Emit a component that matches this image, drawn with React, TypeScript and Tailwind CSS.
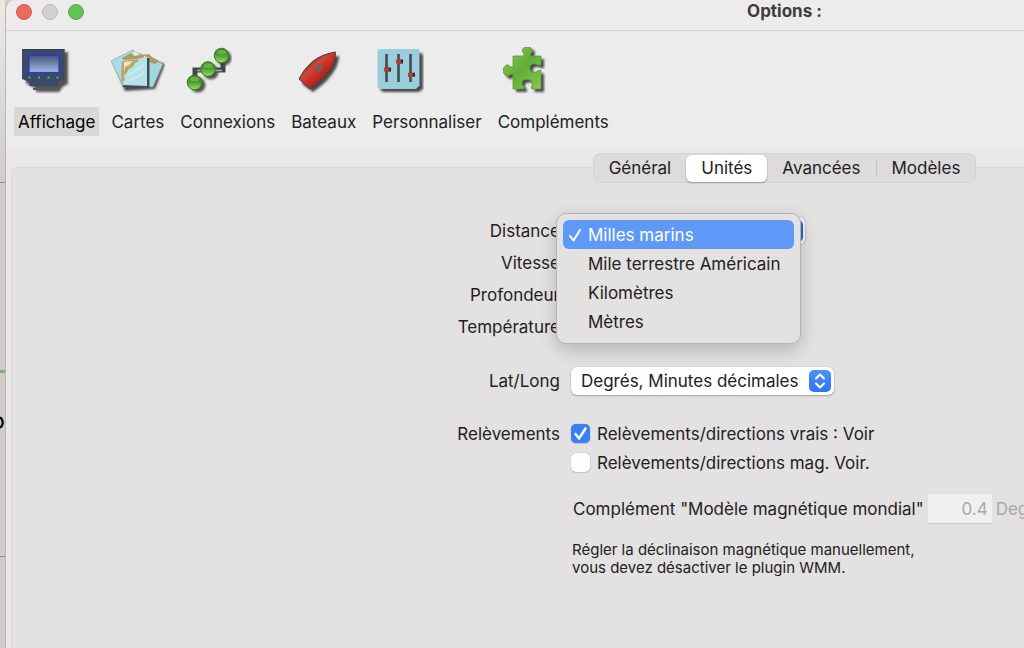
import React, { useState } from "react";

function MonitorIcon() {
  return (
    <svg viewBox="0 0 48 48" className="ml-2 size-12" aria-hidden="true">
      <defs>
        <linearGradient id="screen" x1="0" y1="0" x2="0" y2="1">
          <stop offset="0" stopColor="#42597b" />
          <stop offset="1" stopColor="#a3b9e6" />
        </linearGradient>
        <filter id="soft" x="-20%" y="-20%" width="140%" height="140%">
          <feGaussianBlur stdDeviation="0.8" />
        </filter>
      </defs>
      <path d="M4 5h42v32l-4 2-4 4v2H14v-3L4 36z" fill="#222" opacity="0.75" filter="url(#soft)" />
      <path d="M20 39h10v2h8v2H11v-2h9z" fill="#57585c" />
      <path d="M0 2h42.500v31l-6 1v5H7.500v-4L0 32z" fill="#3b4a66" />
      <path d="M0 2h42.500v2H0z" fill="#334468" />
      <rect x="7" y="8.500" width="30" height="17" fill="url(#screen)" stroke="#3037d4" strokeWidth="1.200" />
      <path d="M6.500 30.500h2M16 30.500h2M25.500 30.500h2M34.500 30.500h2" stroke="#55b76b" strokeWidth="1.800" />
    </svg>
  );
}

function ChartsIcon() {
  return (
    <svg viewBox="0 0 54 48" className="ml-1 h-12 w-[54px]" aria-hidden="true">
      <path d="m3 17 21-11 6 4 24 7-10 25-30 2z" fill="#222" opacity="0.8" filter="url(#soft)" />
      <path d="M0 14 22 3l5 4-8 32-6 1z" fill="#a9dce4" stroke="#7ea4aa" strokeWidth="0.700" />
      <path d="m25 5 27 12-10 23H31z" fill="#a4d7e0" stroke="#779ba1" strokeWidth="0.700" />
      <path d="m11 11 9-5 3 3 7-1 8-1 3 3 7 4-4 3-6-2-8 1-14 1z" fill="#b09a58" />
      <path d="m24 4 4 3-3 2-3-2zM33 9l5 2-2 3-4-1z" fill="#efe9d6" />
      <path d="M11 13c8 0 16-1 25-3v30l-23-1z" fill="#b5e3e9" />
      <path d="M36 11h2.500v30l-27-1 1-2 23.500 1z" fill="#424d50" />
      <path d="m11 14 17-2-1 3-3 1-2 4-4 2-3 5-2 1 1 5-3 2-1-7z" fill="#b9a66d" />
      <path d="m13 15 9-1-4 4-4 2-1 5z" fill="#ece4c6" />
      <path d="m18 29 7-6 8-5M18 34c6-5 11-3 15-9" fill="none" stroke="#d2f0f3" strokeWidth="1.300" />
    </svg>
  );
}

function ConnectionsIcon() {
  return (
    <svg viewBox="-2 0 48 48" className="ml-2 size-12" aria-hidden="true">
      <defs>
        <linearGradient id="ball" x1="0" y1="0" x2="0" y2="1">
          <stop offset="0" stopColor="#39851f" />
          <stop offset="0.450" stopColor="#4b9a2b" />
          <stop offset="0.550" stopColor="#55a832" />
          <stop offset="1" stopColor="#9ae065" />
        </linearGradient>
      </defs>
      <g fill="#222" opacity="0.750" filter="url(#soft)">
        <circle cx="38" cy="11" r="7.500" />
        <circle cx="25" cy="25" r="7.500" />
        <circle cx="12" cy="38" r="7.500" />
      </g>
      <path d="M9 34V23h14M23 23h14V12" fill="none" stroke="#3c4850" strokeWidth="5" />
      <path d="M11 23.500h25" stroke="#a8afb3" strokeWidth="1.400" />
      <g fill="url(#ball)" stroke="#35731f" strokeWidth="0.900">
        <circle cx="35.500" cy="8.500" r="7.300" />
        <circle cx="22" cy="22" r="7.300" />
        <circle cx="8.500" cy="35.500" r="7.300" />
      </g>
      <g fill="#b8de9e" opacity="0.350">
        <ellipse cx="35.500" cy="5" rx="4.500" ry="2.300" />
        <ellipse cx="22" cy="18.500" rx="4.500" ry="2.300" />
        <ellipse cx="8.500" cy="32" rx="4.500" ry="2.300" />
      </g>
    </svg>
  );
}

function BoatIcon() {
  return (
    <svg viewBox="0 0 48 48" className="ml-2 size-12" aria-hidden="true">
      <defs>
        <linearGradient id="hull" x1="0.200" y1="0.200" x2="0.750" y2="0.800">
          <stop offset="0" stopColor="#7e2723" />
          <stop offset="0.350" stopColor="#c9473e" />
          <stop offset="0.550" stopColor="#cf2f26" />
          <stop offset="1" stopColor="#8e1e1a" />
        </linearGradient>
      </defs>
      <path d="M7 37C13 23 28 9 44 9c0 12-11 26-26 36z" fill="#222" opacity="0.800" filter="url(#soft)" />
      <path d="M4 32Q8 23 17.500 14.500 27 7 40.500 5 41 14 36 21 29 32 15 42z" fill="url(#hull)" stroke="#5e3431" strokeWidth="1" />
      <path d="m21 20 4-3 3 2-1 4-3 2-4-1z" fill="#6d6260" />
    </svg>
  );
}

function SlidersIcon() {
  return (
    <svg viewBox="0 0 48 48" className="ml-2 size-12" aria-hidden="true">
      <path d="M4 6h41l2 2v34l-4 3H7l-3-3z" fill="#222" opacity="0.800" filter="url(#soft)" />
      <path d="M3 2h39.500l1 1v35.500L40 42H4l-2.500-2V3z" fill="#9bcedd" />
      <path d="M10.500 7v28M22.500 7v28M34.500 7v28" stroke="#424c50" strokeWidth="2.600" />
      <path d="M10 22.500h5M22 14.500h5M34 27.800h5" stroke="#332827" strokeWidth="4" />
      <path d="M8 22.500h5M20 14.500h5M32 27.800h5" stroke="#c0392d" strokeWidth="4.200" />
    </svg>
  );
}

function PuzzleIcon() {
  const piece =
    "M12 9h11V6l-1.500-1V2L24 0h5l2 2v3l-1.500 2v2H40v9h-3.500l-1.500-1h-4l-2 2v4l2 2h4l2-1.500H40V42h-9.500v-3l1-1.500-1-3.500-3-1.500h-4L21 34.500v3l2 2V42H12V27.500H9.500L7 29H5l-2.500-3v-5L5 18h2.500L10 20h2z";
  return (
    <svg viewBox="1 0 48 48" className="ml-2 size-12" aria-hidden="true">
      <defs>
        <linearGradient id="piece" x1="0" y1="0" x2="1" y2="1">
          <stop offset="0" stopColor="#8fcb58" />
          <stop offset="0.500" stopColor="#61ad35" />
          <stop offset="1" stopColor="#86c754" />
        </linearGradient>
      </defs>
      <path d={piece} transform="translate(3 3)" fill="#222" opacity="0.800" filter="url(#soft)" />
      <path d={piece} fill="url(#piece)" stroke="#5e9b3a" strokeWidth="0.800" />
    </svg>
  );
}

const sections = [
  { name: "Affichage", icon: <MonitorIcon /> },
  { name: "Cartes", icon: <ChartsIcon /> },
  { name: "Connexions", icon: <ConnectionsIcon /> },
  { name: "Bateaux", icon: <BoatIcon /> },
  { name: "Personnaliser", icon: <SlidersIcon /> },
  { name: "Compléments", icon: <PuzzleIcon /> },
];

const tabs = ["Général", "Unités", "Avancées", "Modèles"];
const distances = ["Milles marins", "Mile terrestre Américain", "Kilomètres", "Mètres"];

function PopUp({ id, options, width }: { id: string; options: string[]; width: string }) {
  return (
    <div className={`relative ${width}`}>
      <select
        id={id}
        className="h-7 w-full appearance-none rounded-md bg-white pr-8 pl-[10px] shadow-[0_0_1px_rgba(0,0,0,0.3),0_1px_2px_rgba(0,0,0,0.25)]"
      >
        {options.map((o) => (
          <option key={o}>{o}</option>
        ))}
      </select>
      <svg
        viewBox="0 0 22 22"
        className="pointer-events-none absolute top-[3px] right-[3px] size-[22px] rounded-[5px] bg-linear-to-b from-[#4b94f8] to-[#2e72ee]"
        aria-hidden="true"
      >
        <path d="m7 8.500 4-4 4 4M7 13.500l4 4 4-4" fill="none" stroke="#fff" strokeWidth="2" strokeLinecap="round" strokeLinejoin="round" />
      </svg>
    </div>
  );
}

function CheckBox({ label, checked, onChange }: { label: string; checked: boolean; onChange: () => void }) {
  return (
    <label className="flex h-[29px] items-center gap-[7px]">
      <span className="relative size-[19px]">
        <input
          type="checkbox"
          checked={checked}
          onChange={onChange}
          className="block size-[19px] appearance-none rounded-[5px] bg-white shadow-[0_0_1px_rgba(0,0,0,0.4),0_1px_1px_rgba(0,0,0,0.1)] checked:bg-[#3a80f5]"
        />
        {checked && (
          <svg viewBox="0 0 19 19" className="pointer-events-none absolute inset-0" aria-hidden="true">
            <path d="m4.500 10 3.500 4.500 6.500-10" fill="none" stroke="#fff" strokeWidth="2.400" strokeLinecap="round" strokeLinejoin="round" />
          </svg>
        )}
      </span>
      {label}
    </label>
  );
}

export default function App() {
  const [section, setSection] = useState("Affichage");
  const [tab, setTab] = useState("Unités");
  const [distance, setDistance] = useState("Milles marins");
  const [trueBearing, setTrueBearing] = useState(true);
  const [magBearing, setMagBearing] = useState(false);

  return (
    <div className="flex h-screen overflow-hidden bg-[#d0cdca] font-['Inter','Liberation_Sans',sans-serif] text-[17px] leading-6 text-[#222122]">
      <div className="flex w-[5px] shrink-0 flex-col overflow-hidden bg-linear-to-b from-[#ede9e4] to-[#cecbc8] to-30%">
        <div className="h-[183px] border-b border-[#8f8d8b]" />
        <div className="h-[187px]" />
        <div className="h-[3px] bg-[#7eab7e]" />
        <div className="flex h-[183px] justify-end pt-8 text-2xl text-black">o</div>
        <div className="border-t border-[#8f8d8b]" />
      </div>

      <main className="flex min-w-[1558px] flex-1 flex-col overflow-hidden rounded-tl-[10px] border-l border-[#b9b7b7] bg-[#e9e7e8]">
        <header className="relative flex h-[31px] items-center justify-center border-b border-[#d6d3d4] bg-[#eeebec] pb-2">
          <div className="absolute top-1 left-[10px] flex gap-[10px]">
            <button aria-label="Fermer" className="size-4 rounded-full border border-[#d85a50] bg-[#ed6a5e]" />
            <button aria-label="Réduire" className="size-4 rounded-full border border-[#bcb9ba] bg-[#d2d0d1]" />
            <button aria-label="Agrandir" className="size-4 rounded-full border border-[#54b145] bg-[#61c554]" />
          </div>
          <h1 className="font-bold text-[#3d3b3c]">Options :</h1>
        </header>

        <nav className="flex h-[116px] items-start gap-2 bg-[#ececec] pt-4 pl-2">
          {sections.map((s) => (
            <button key={s.name} onClick={() => setSection(s.name)} className="flex flex-col items-start gap-3">
              {s.icon}
              <span className={`flex h-[29px] items-center px-1 ${s.name === section ? "bg-[#d9d8d8] text-black" : ""}`}>
                {s.name}
              </span>
            </button>
          ))}
        </nav>

        <section className="mx-[5px] mt-5 flex-1 rounded-t-md border border-b-0 border-[#d8d6d7] bg-[#e3e1e2]">
          <div className="-mt-[15px] flex justify-center">
            <div className="flex h-[30px] items-center rounded-[7px] border border-[#d4d2d3] bg-[#dddbdc]">
              {tabs.map((t) => (
                <React.Fragment key={t}>
                  {t === "Modèles" && <span className="h-4 w-px bg-[#c6c4c5]" />}
                  <button
                    onClick={() => setTab(t)}
                    className={`h-[27px] px-[15px] ${t === tab ? "rounded-md bg-white shadow-[0_1px_2px_rgba(0,0,0,0.3)]" : ""}`}
                  >
                    {t}
                  </button>
                </React.Fragment>
              ))}
            </div>
          </div>

          <form className="grid grid-cols-[548px_1fr] gap-x-[11px] pt-8">
            <span id="distance-label" className="flex h-8 items-center justify-end">Distance</span>
            <div className="relative flex items-center">
              <button
                type="button"
                aria-labelledby="distance-label"
                className="flex h-7 w-[234px] items-center justify-end rounded-md bg-[#f2f6fc] pr-[2px] shadow-[0_0_2px_rgba(0,0,0,0.35)]"
              >
                <span className="size-[22px] rounded-[5px] bg-[#3564c4]" />
              </button>
              <ul
                role="listbox"
                aria-labelledby="distance-label"
                className="absolute -top-[2px] -left-[15px] z-10 w-[245px] rounded-[10px] border border-[#b4b2b2] bg-[#e4e2e1] px-[6px] pt-[6px] pb-[7px] shadow-[0_6px_18px_rgba(0,0,0,0.2)]"
              >
                {distances.map((d) => (
                  <li key={d} role="option" aria-selected={d === distance}>
                    <button
                      type="button"
                      onClick={() => setDistance(d)}
                      className={`flex h-[29px] w-full items-center gap-[6px] rounded-md pl-[5px] whitespace-nowrap ${
                        d === distance ? "bg-[#5f99f7] text-white" : ""
                      }`}
                    >
                      <svg viewBox="0 0 14 14" className="size-[14px]" aria-hidden="true">
                        {d === distance && (
                          <path d="m2 8 3.500 4.500L12 2" fill="none" stroke="#fff" strokeWidth="2" strokeLinecap="round" strokeLinejoin="round" />
                        )}
                      </svg>
                      {d}
                    </button>
                  </li>
                ))}
              </ul>
            </div>

            <label htmlFor="speed" className="flex h-8 items-center justify-end">Vitesse</label>
            <div className="flex items-center">
              <PopUp id="speed" options={["Nœuds"]} width="w-[200px]" />
            </div>

            <label htmlFor="depth" className="flex h-8 items-center justify-end">Profondeur</label>
            <div className="flex items-center">
              <PopUp id="depth" options={["Mètres"]} width="w-[200px]" />
            </div>

            <label htmlFor="temperature" className="flex h-8 items-center justify-end">Température</label>
            <div className="flex items-center">
              <PopUp id="temperature" options={["Celsius"]} width="w-[200px]" />
            </div>

            <label htmlFor="latlong" className="mt-[22px] flex h-8 items-center justify-end">Lat/Long</label>
            <div className="mt-[22px] flex items-center">
              <PopUp id="latlong" options={["Degrés, Minutes décimales"]} width="w-[263px]" />
            </div>

            <span className="mt-[22px] flex h-[29px] items-center justify-end">Relèvements</span>
            <div className="mt-[22px]">
              <CheckBox label="Relèvements/directions vrais : Voir" checked={trueBearing} onChange={() => setTrueBearing(!trueBearing)} />
              <CheckBox label="Relèvements/directions mag. Voir." checked={magBearing} onChange={() => setMagBearing(!magBearing)} />
            </div>

            <div className="col-start-2 mt-[17px] flex items-center gap-1 pl-[2px]">
              <label htmlFor="variation">Complément "Modèle magnétique mondial"</label>
              <input
                id="variation"
                disabled
                defaultValue="0.4"
                className="h-[30px] w-16 border-b border-[#cfcdce] bg-[#f1f0f1] pr-1 text-right text-[#a9a7a8]"
              />
              <span className="text-[#a9a7a8]">Degrés</span>
            </div>

            <p className="col-start-2 mt-[17px] pl-px text-[15px] leading-[18px]">
              Régler la déclinaison magnétique manuellement,
              <br />
              vous devez désactiver le plugin WMM.
            </p>
          </form>
        </section>
      </main>
    </div>
  );
}
